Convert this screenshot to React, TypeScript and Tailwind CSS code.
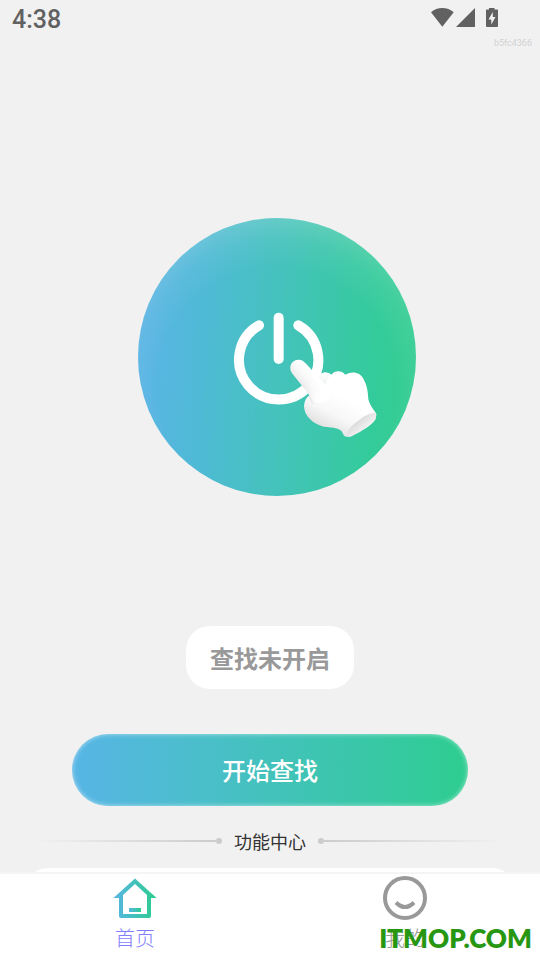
import { useState } from 'react';
import clsx from 'clsx';

function StatusBar() {
    return (
        <header className="flex h-9 shrink-0 items-center justify-between pl-3 pr-10 pt-1 text-[#616161]">
            <span className="font-['Roboto',sans-serif] text-[25px] font-medium leading-8">4:38</span>
            <svg className="mb-1 h-5 w-[70px]" viewBox="0 0 70 20" fill="currentColor" aria-hidden="true">
                <path d="M1 4.200C4 1.600 8 0 12.300 0s8.300 1.600 11.400 4.200L12.300 18.800z" />
                <path d="M45 0v19H26z" />
                <path fillRule="evenodd" d="M59 1.500V0h5.500v1.500H67q1 0 1 1V18q0 1-1 1H57q-1 0-1-1V2.500q0-1 1-1zM62.800 4L58.500 11.500h2.800v5l4.200-7.500h-2.700z" />
            </svg>
        </header>
    );
}

function PowerDial() {
    return (
        <svg className="w-full" viewBox="24 24 834 834" aria-hidden="true">
            <defs>
                <linearGradient id="dial" x1="0" y1="0.45" x2="1" y2="0.5">
                    <stop offset="0" stopColor="#5bb4e5" />
                    <stop offset="0.2" stopColor="#50b9d8" />
                    <stop offset="0.5" stopColor="#45c2bd" />
                    <stop offset="0.85" stopColor="#34cb9b" />
                    <stop offset="1" stopColor="#35cd92" />
                </linearGradient>
                <radialGradient id="dialGlow" gradientUnits="userSpaceOnUse" cx="441" cy="530" r="510">
                    <stop offset="0.7" stopColor="#fff" stopOpacity="0" />
                    <stop offset="0.86" stopColor="#e8f4e8" stopOpacity="0.07" />
                    <stop offset="1" stopColor="#e8f4e8" stopOpacity="0.2" />
                </radialGradient>
                <linearGradient id="palm" gradientUnits="userSpaceOnUse" x1="650" y1="510" x2="570" y2="660">
                    <stop offset="0.3" stopColor="#fff" />
                    <stop offset="0.65" stopColor="#f7f7f7" />
                    <stop offset="1" stopColor="#dcdcdc" />
                </linearGradient>
                <linearGradient id="finger" gradientUnits="userSpaceOnUse" x1="500" y1="530" x2="545" y2="490">
                    <stop offset="0" stopColor="#e2e2e2" />
                    <stop offset="0.6" stopColor="#f8f8f8" />
                    <stop offset="1" stopColor="#fff" />
                </linearGradient>
                <linearGradient id="fingerFade" gradientUnits="userSpaceOnUse" x1="530" y1="520" x2="575" y2="565">
                    <stop offset="0" stopColor="#fff" stopOpacity="0" />
                    <stop offset="1" stopColor="#fff" />
                </linearGradient>
                <linearGradient id="cuff" gradientUnits="userSpaceOnUse" x1="675" y1="635" x2="700" y2="665">
                    <stop offset="0" stopColor="#d9d9d9" />
                    <stop offset="1" stopColor="#f4f4f4" />
                </linearGradient>
                <linearGradient id="knuckle" x1="0" y1="0" x2="0" y2="1">
                    <stop offset="0" stopColor="#fff" />
                    <stop offset="1" stopColor="#eef2f1" />
                </linearGradient>
            </defs>
            <circle cx="441" cy="441" r="417" fill="url(#dial)" />
            <circle cx="441" cy="441" r="417" fill="url(#dialGlow)" />
            <g fill="none" stroke="#fff" strokeWidth="30" strokeLinecap="round">
                <path d="M387 346A119 119 0 1 0 505 346" />
                <path d="M446 323V447" />
            </g>
            <path
                fill="url(#palm)"
                d="M565 501C575 483 592 485 604 494C615 480 635 481 646 494C668 482 690 487 700 506C711 525 714 545 715 568C721 591 735 602 739 613C734 640 690 665 655 680C641 682 640 671 634 662C620 652 603 652 582 650C550 643 522 617 522 588C523 573 529 563 538 556Z"
            />
            <path fill="url(#knuckle)" d="M565 501C575 483 592 485 604 494C593 503 588 514 588 528L574 514Z" />
            <path fill="url(#finger)" d="M486 490C472 467 488 449 506 449C516 449 523 455 529 462L592 530C607 550 570 590 546 571Q540 558 531 546Z" />
            <path fill="url(#fingerFade)" d="M529 462L600 540C610 560 580 592 550 573Q540 558 531 546L508 518Z" />
            <path fill="none" stroke="#e2e2e2" strokeWidth="3" strokeLinecap="round" d="M538 556Q540 573 548 580" />
            <path fill="url(#cuff)" d="M739 612C733 605 714 612 693 626C670 641 650 659 651 675Q653 684 665 679C695 664 734 641 738 624Z" />
        </svg>
    );
}

function HomeIcon() {
    return (
        <svg className="h-11 w-11" viewBox="0 0 44 44" aria-hidden="true">
            <defs>
                <linearGradient id="home" gradientUnits="userSpaceOnUse" x1="4" y1="0" x2="40" y2="0">
                    <stop offset="0" stopColor="#55b7de" />
                    <stop offset="1" stopColor="#2fcb94" />
                </linearGradient>
                <linearGradient id="homeBar" gradientUnits="userSpaceOnUse" x1="16" y1="0" x2="28" y2="0">
                    <stop offset="0" stopColor="#55b7de" />
                    <stop offset="1" stopColor="#2fcb94" />
                </linearGradient>
            </defs>
            <path
                fill="url(#home)"
                fillRule="evenodd"
                d="M22 2.500L43.600 22H38v18q0 2-2 2H8q-2 0-2-2V22H.4zM22 8L10 19v19h24V19z"
            />
            <path fill="url(#homeBar)" d="M16 32h12v4H16z" />
        </svg>
    );
}

function SmileIcon() {
    return (
        <svg className="h-11 w-11" viewBox="0 0 44 44" fill="none" stroke="#999" strokeWidth="4" aria-hidden="true">
            <circle cx="22" cy="22" r="20" />
            <path d="M13 26.500Q22 35.500 31 26.500" />
        </svg>
    );
}

const tabs = [
    { key: 'home', label: '首页', icon: HomeIcon },
    { key: 'mine', label: '我的', icon: SmileIcon },
];

export default function App() {
    const [activeTab, setActiveTab] = useState('home');

    return (
        <div className="relative flex h-screen flex-col overflow-hidden bg-[#f1f1f1] font-['Noto_Sans_CJK_SC',sans-serif]">
            <StatusBar />

            <main className="flex min-h-0 flex-1 flex-col overflow-hidden">
                <p className="pr-2 text-right font-['Roboto',sans-serif] text-[9px] leading-[14px] text-[#d2d2d2]">b5fc4366</p>

                {/* Power dial */}
                <div className="flex justify-center pl-3.5 pt-42">
                    <button type="button" aria-label="开始查找" className="w-[278px] rounded-full">
                        <PowerDial />
                    </button>
                </div>

                <p className="mt-[130px] self-center rounded-3xl bg-white px-6 py-3.5 text-2xl font-bold leading-[35px] text-[#999]">
                    查找未开启
                </p>

                <button
                    type="button"
                    className="mx-18 mt-[45px] h-18 shrink-0 rounded-full bg-linear-to-r from-[#57b5e5] via-[#43c2bb] to-[#2dcd90] text-2xl font-medium text-white shadow-[inset_0_0_5px_rgba(255,255,255,0.6)]"
                >
                    开始查找
                </button>

                {/* Section title */}
                <div className="mt-[22px] flex items-center px-9">
                    <span className="h-0.5 flex-1 bg-linear-to-r from-transparent to-[#ccc]" />
                    <span className="h-1.5 w-1.5 rounded-full bg-[#ccc]" />
                    <h2 className="px-3 text-lg font-normal leading-[26px] text-[#333]">功能中心</h2>
                    <span className="h-1.5 w-1.5 rounded-full bg-[#ccc]" />
                    <span className="h-0.5 flex-1 bg-linear-to-l from-transparent to-[#ccc]" />
                </div>

                <section className="mx-6 mt-3.5 h-40 shrink-0 rounded-3xl bg-white" />
            </main>

            <nav className="relative flex shrink-0 border-t-2 border-[#f5f5f5] bg-white pb-1">
                {tabs.map((tab) => (
                    <button
                        key={tab.key}
                        type="button"
                        onClick={() => setActiveTab(tab.key)}
                        className={clsx(
                            'flex flex-1 flex-col items-center pt-0.5 text-xl font-light leading-9',
                            activeTab === tab.key ? 'text-[#7f7ffb]' : 'text-[#999]'
                        )}
                    >
                        <tab.icon />
                        {tab.label}
                    </button>
                ))}
            </nav>

            <span className="pointer-events-none absolute bottom-1 right-2 font-['Lato',sans-serif] text-[26px] font-extrabold leading-9 text-[#279712]">
                ITMOP.COM
            </span>
        </div>
    );
}
